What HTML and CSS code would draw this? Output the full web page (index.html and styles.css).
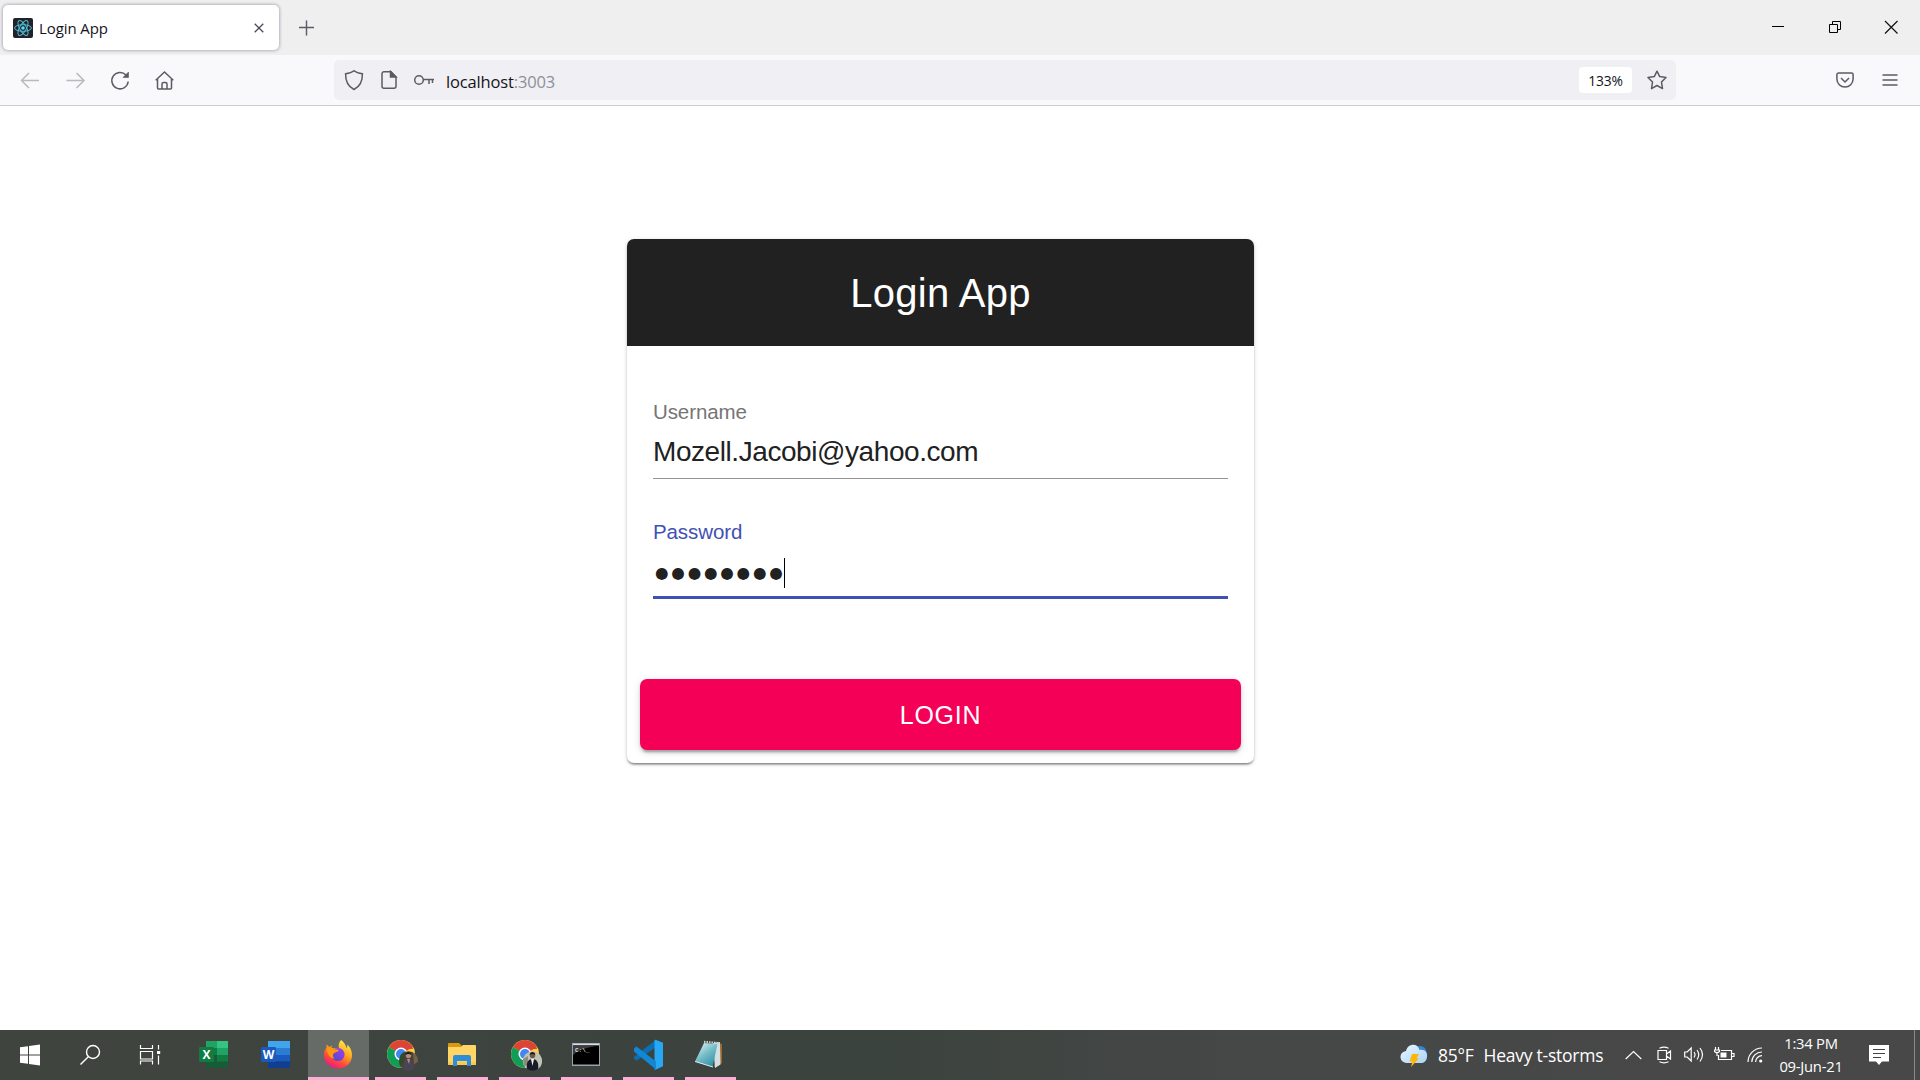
FILE: index.html
```html
<!DOCTYPE html>
<html lang="en">
<head>
<meta charset="utf-8">
<title>Login App</title>
<link rel="stylesheet" href="styles.css">
</head>
<body>
<header class="tabstrip">
  <div class="tab">
    <svg class="favicon" width="20" height="20" viewBox="0 0 20 20"><rect width="20" height="20" rx="2" fill="#20232a"/><g fill="none" stroke="#53bcd6" stroke-width="1"><ellipse cx="10" cy="10" rx="8.4" ry="3.3"/><ellipse cx="10" cy="10" rx="8.4" ry="3.3" transform="rotate(60 10 10)"/><ellipse cx="10" cy="10" rx="8.4" ry="3.3" transform="rotate(120 10 10)"/></g><circle cx="10" cy="10" r="1.8" fill="#61dafb"/></svg>
    <span class="tab-title">Login App</span>
    <svg class="tab-close" width="10" height="10" viewBox="0 0 10 10"><path d="M.7.7l8.6 8.6M9.3.7L.7 9.3" stroke="#4a4a55" stroke-width="1.3"/></svg>
  </div>
  <svg class="new-tab" width="16" height="16" viewBox="0 0 16 16"><path d="M7.5 .5v15M0 7.5h15" stroke="#5b5b66" stroke-width="1.4"/></svg>
  <div class="window-controls">
    <svg width="62" height="54" viewBox="0 0 62 54"><path d="M28 26.5h12" stroke="#000"/></svg>
    <svg width="55" height="54" viewBox="0 0 55 54"><path d="M23.500 24.500h8v8h-8zM26.500 24v-2.500h8v8h-3" fill="none" stroke="#000"/></svg>
    <svg width="59" height="54" viewBox="0 0 59 54"><path d="M24 21l12.500 12.500M36.500 21L24 33.500" stroke="#111" stroke-width="1.2"/></svg>
  </div>
</header>

<nav class="toolbar">
  <div class="nav-buttons">
    <svg width="45" height="50" viewBox="0 0 45 50" class="disabled"><path d="M39 25.500H22M29 18l-7.500 7.500L29 33"/></svg>
    <svg width="45" height="50" viewBox="0 0 45 50" class="disabled"><path d="M21.500 25.500h17M31.500 18l7.500 7.500-7.500 7.500"/></svg>
    <svg width="45" height="50" viewBox="0 0 45 50"><path d="M36 20a8.200 8.200 0 1 0 2.200 6.500"/><path d="M38.500 17v5.500H33z" fill="#5b5b66" stroke-width=".6"/></svg>
    <svg width="45" height="50" viewBox="0 0 45 50"><path d="M20.700 25.200l8.800-8.200 8.800 8.200M22.500 23.800V33a1 1 0 0 0 1 1h12a1 1 0 0 0 1-1v-9.200M27 34v-5a1.500 1.500 0 0 1 1.500-1.500h2A1.500 1.500 0 0 1 32 29v5"/></svg>
  </div>
  <div class="urlbar">
    <svg width="20" height="22" viewBox="0 0 20 22"><path d="M10 1.700c2.600 2.200 5.200 2.600 8.400 3 .2 7-1.400 12.100-8.400 15.800C3 16.800 1.400 11.700 1.600 4.700 4.800 4.300 7.400 3.900 10 1.700z"/></svg>
    <svg class="page-icon" width="18" height="20" viewBox="0 0 18 20"><path d="M11 1.700H4A2 2 0 0 0 2 3.700v12.600a2 2 0 0 0 2 2h10a2 2 0 0 0 2-2V7z"/><path d="M10.500 1.500V7H16z" fill="#5b5b66"/></svg>
    <svg class="key-icon" width="22" height="14" viewBox="0 0 22 14"><circle cx="6" cy="7" r="4.300"/><path d="M10.300 6.500H21M16 6.500V11M19.500 6.500V10"/></svg>
    <span class="url">localhost<span class="port">:3003</span></span>
    <span class="zoom-level">133%</span>
    <svg class="star" width="20" height="20" viewBox="0 0 20 20"><path d="M10 1.200l2.700 5.400 6.300.9-4.500 4.600 1 6.500L10 15.500l-5.500 3.100 1-6.500L1 7.500l6.300-.9z" stroke-linejoin="round"/></svg>
  </div>
  <div class="toolbar-end">
    <svg width="18" height="16" viewBox="0 0 18 16"><path d="M2.500 1h13a1.600 1.600 0 0 1 1.600 1.600V7a8.100 8.100 0 0 1-16.200 0V2.600A1.600 1.600 0 0 1 2.500 1z"/><path d="M5 6l4 4 4-4"/></svg>
    <svg width="16" height="14" viewBox="0 0 16 14"><path d="M.5 2h15M.5 7h15M.5 12h15"/></svg>
  </div>
</nav>

<main class="page">
  <section class="card">
    <h1 class="card-header">Login App</h1>
    <div class="card-body">
      <div class="field">
        <span class="label">Username</span>
        <span class="value">Mozell.Jacobi@yahoo.com</span>
      </div>
      <div class="field focused">
        <span class="label">Password</span>
        <span class="value"><span class="dots">●●●●●●●●</span><span class="caret"></span></span>
      </div>
    </div>
    <button class="login">LOGIN</button>
  </section>
</main>

<footer class="taskbar">
  <div class="system">
    <svg width="60" height="50" viewBox="0 0 60 50"><path d="M20 17.300l8-1.100v8.300h-8zM29 16l11-1.500v10H29zM20 25.500h8v8.300l-8-1.100zM29 25.500h11v10L29 34z" fill="#fff"/></svg>
    <svg width="60" height="50" viewBox="0 0 60 50" fill="none" stroke="#fff" stroke-width="1.400"><circle cx="33" cy="22" r="6.500"/><path d="M28.300 26.700L20.500 34.500"/></svg>
    <svg width="60" height="50" viewBox="0 0 60 50" fill="none" stroke="#fff" stroke-width="1.200"><path d="M20.500 15v3.500h12V15M20.500 21.500h12v7.500h-12zM20.500 34.500V31h12v3.500M38.500 15v4.500M38.500 25.500v9"/><path d="M37 21h3.200v3H37z" fill="#fff" stroke="none"/></svg>
  </div>
  <div class="apps">
    <div class="app">
      <svg width="32" height="32" viewBox="0 0 32 32"><path d="M8 2h11v7H8z" fill="#21a366"/><path d="M19 2h11v7H19z" fill="#33c481"/><path d="M8 9h11v7H8z" fill="#107c41"/><path d="M19 9h11v7H19z" fill="#21a366"/><path d="M8 16h22v13H8z" fill="#185c37"/><path d="M19 16h11v6.500H19z" fill="#107c41"/><rect x="1" y="8" width="15" height="15" rx="1" fill="#107c41"/><text x="8.500" y="20" class="office">X</text></svg>
    </div>
    <div class="app">
      <svg width="32" height="32" viewBox="0 0 32 32"><path d="M8 2h22v7H8z" fill="#41a5ee"/><path d="M8 9h22v7H8z" fill="#2b7cd3"/><path d="M8 16h22v6.500H8z" fill="#185abd"/><path d="M8 22.500h22V29H8z" fill="#103f91"/><rect x="1" y="8" width="15" height="15" rx="1" fill="#185abd"/><text x="8.500" y="20" class="office">W</text></svg>
    </div>
    <div class="app running active">
      <svg width="32" height="32" viewBox="0 0 32 32"><defs><linearGradient id="ff" x1=".8" y1="0" x2=".25" y2="1"><stop offset="0" stop-color="#fff44f"/><stop offset=".4" stop-color="#ffa81c"/><stop offset=".7" stop-color="#ff4a3b"/><stop offset="1" stop-color="#e61587"/></linearGradient><linearGradient id="ffp" x1="1" y1="0" x2="0" y2="1"><stop offset="0" stop-color="#a43df0"/><stop offset="1" stop-color="#4b49c9"/></linearGradient></defs><path d="M19 1c4 3 5 6 5.500 8 1-1 1-2.500.8-3.500C29 9 30 13 30 16c0 8-6 13.500-14 13.500S2 24 2 16c0-3 1-5.500 2.500-7.500V5.500L7.500 8c1-1 2-1.400 3-1.600-1 1-1.600 2-1.500 3L17 9c-1-3 0-6 2-8z" fill="url(#ff)"/><circle cx="16" cy="15.500" r="6.600" fill="url(#ffp)"/><path d="M5 9.500c2-1.300 5-1.200 7 .5 2 1 4 0 5 1.500-1.500 1.500-3.500 1.500-5 2.800-2 1.800-1 4.200 1 5.200-5 0-8-4-8-10z" fill="#ff980e"/></svg>
    </div>
    <div class="app running">
      <svg class="chrome" width="32" height="32" viewBox="0 0 32 32"><circle cx="15" cy="15" r="14" fill="#ffcd40"/><path d="M15 15L2.900 8A14 14 0 0 1 27.100 8z" fill="#dc4437"/><path d="M15 15L2.900 8A14 14 0 0 0 15 29z" fill="#109d58"/><path d="M3 8l6 2h18l-.9-2z" fill="#dc4437"/><circle cx="15" cy="15" r="6.500" fill="#fff"/><circle cx="15" cy="15" r="5" fill="#4285f4"/><circle cx="22.500" cy="22" r="9.700" fill="#4b4235"/><path d="M14 17a9.700 9.700 0 0 1 6-4.400l-2 10-4 4z" fill="#304a2b"/><path d="M27 13.500a9.700 9.700 0 0 1 5 9l-4 3z" fill="#74634c"/><path d="M17 30c0-6 2-10 5.500-10s5.500 4 5.500 10a9.700 9.700 0 0 1-11 0z" fill="#4a4555"/><circle cx="22.500" cy="16.500" r="2.700" fill="#b78b76"/><path d="M19.700 16c-.3-4 5.800-4 5.600 0-1.500-1.500-4-1.500-5.600 0z" fill="#211a19"/><path d="M21 20h3l-1 5z" fill="#b08c96"/></svg>
    </div>
    <div class="app running">
      <svg width="32" height="32" viewBox="0 0 32 32"><path d="M2 5a1 1 0 0 1 1-1h10l3 3v3H2z" fill="#d99a0e"/><path d="M2 8h13l2-2h12a1 1 0 0 1 1 1v18a1 1 0 0 1-1 1H3a1 1 0 0 1-1-1z" fill="#ffd566"/><path d="M2 23h28v2a1 1 0 0 1-1 1H3a1 1 0 0 1-1-1z" fill="#f7c94f"/><path d="M7 27v-9a2 2 0 0 1 2-2h14a2 2 0 0 1 2 2v9h-4v-5H11v5z" fill="#2f8dd6"/></svg>
    </div>
    <div class="app running">
      <svg class="chrome" width="32" height="32" viewBox="0 0 32 32"><circle cx="15" cy="15" r="14" fill="#ffcd40"/><path d="M15 15L2.900 8A14 14 0 0 1 27.100 8z" fill="#dc4437"/><path d="M15 15L2.900 8A14 14 0 0 0 15 29z" fill="#109d58"/><path d="M3 8l6 2h18l-.9-2z" fill="#dc4437"/><circle cx="15" cy="15" r="6.500" fill="#fff"/><circle cx="15" cy="15" r="5" fill="#4285f4"/><circle cx="22.500" cy="22" r="9.700" fill="#c0c4b5"/><path d="M13 20l5-3v9l-4 1z" fill="#8b8d78"/><path d="M17 30c-1-6 1-10 5.500-10s6.500 4 5.500 10a9.700 9.700 0 0 1-11 0z" fill="#161c28"/><circle cx="22.500" cy="16.500" r="2.700" fill="#795342"/><path d="M19.700 16c-.3-4 5.800-4 5.600 0-1.500-1.500-4-1.500-5.600 0z" fill="#1c1717"/><path d="M21 20h3l-1.500 7z" fill="#f2f2f2"/></svg>
    </div>
    <div class="app running">
      <svg class="cmd" width="32" height="32" viewBox="0 0 32 32"><path d="M3 4h28v23H3z" fill="#9ca1a8"/><path d="M4 6.500h26V25.500H4z" fill="#000"/><path d="M4 6.500h26C22 8 10 10 4 16z" fill="#3d3d3d"/><path d="M4 4.700h26v1.300H4z" fill="#d8dde4"/><text x="6" y="12.500" class="prompt">C:\_</text></svg>
    </div>
    <div class="app running">
      <svg width="32" height="32" viewBox="0 0 32 32"><path d="M2 19.500l2.500 2.200L24 8V.8L2 17.800z" fill="#0a6fb5"/><path d="M23.500.8L31 3.800v23.500l-7.500 3.500c-.6 0-1-.3-1-.8V1.700c0-.5.400-.9 1-.9z" fill="#27a8f4"/><path d="M2 9.500l2.500-2L24 22.500V30.500L2 12.500z" fill="#1187d6"/></svg>
    </div>
    <div class="app running">
      <svg width="32" height="32" viewBox="0 0 32 32"><defs><linearGradient id="np" x1="0" y1="0" x2=".7" y2="1"><stop offset="0" stop-color="#e9fafa"/><stop offset=".55" stop-color="#72bac6"/><stop offset="1" stop-color="#2f94a8"/></linearGradient></defs><path d="M25 4l3 1v19l-3 2-5 2z" fill="#99682d"/><path d="M19 4l7-1 .5 22.500-5.500 3.500z" fill="#d4dfe1"/><path d="M10 4l13.500 1L18.500 28 1 22.500z" fill="url(#np)"/><path d="M1 22.500l18 5.500" stroke="#e0eeee"/><path d="M10 2.800l15 1.200" stroke="#d2d2ce" stroke-width="2" stroke-dasharray="1.500 1"/></svg>
    </div>
  </div>
  <div class="tray">
    <svg class="weather" width="28" height="24" viewBox="0 0 28 24"><defs><linearGradient id="cl" x1="0" y1="0" x2="1" y2="1"><stop offset="0" stop-color="#eaf7ff"/><stop offset="1" stop-color="#a9d3f6"/></linearGradient></defs><path d="M17 2.500c5-1.500 9 1 9.300 5 2 3 .7 7-2 9z" fill="#3b82ca"/><path d="M7 19a6 6 0 0 1-1-12C8-1 18-1 19.500 6c6-1 8 3 7.500 7s-3 6-6 6z" fill="url(#cl)"/><path d="M12 10h7l-2.500 4.500H19L11 23l1.500-5.500H9.500z" fill="#fdb50a"/></svg>
    <span class="weather-text"><span>85°F</span><span>Heavy t-storms</span></span>
    <svg class="chevron" width="17" height="10" viewBox="0 0 17 10"><path d="M.7 9l7.800-7.500L16.300 9"/></svg>
    <svg class="meet" width="15" height="18" viewBox="0 0 15 18"><path d="M1 4.500h8.500v9H1zM9.500 8l4-3v8l-4-3M2.500 2.200q4.500-2 9 0M2.500 15.800q4.500 2 9 0"/></svg>
    <svg class="speaker" width="20" height="18" viewBox="0 0 20 18"><path d="M.7 6h2.500l4-4v13l-4-4H.7zM10 6q2 2.500 0 5.500M13 4q3.500 4.500 0 9.500M16 2q5 6.500 0 13.500"/></svg>
    <svg class="battery" width="21" height="16" viewBox="0 0 21 16"><path d="M7 3.500h10.500v9h-13V8M17.500 6.500H20v3h-2.500M1.500 0v2.500M4.500 0v2.500M.5 3h5v1.500q-2.500 2.500-5 0zM3 6v3"/><path d="M6.500 5.500h6v5h-6z" class="charge"/></svg>
    <svg class="wifi" width="16" height="16" viewBox="0 0 16 16"><path d="M1 15A14 14 0 0 1 15 1M4.800 15A10 10 0 0 1 15 5M8.600 15A6.300 6.300 0 0 1 15 8.700"/><circle cx="13.700" cy="14" r="1.600" fill="#fff" stroke="none"/></svg>
    <div class="clock"><span>1:34 PM</span><span>09-Jun-21</span></div>
    <svg class="notes" width="20" height="20" viewBox="0 0 20 20"><path d="M0 0h20v16.500h-7L10 20l-3-3.500H0z" fill="#fff" stroke="none"/><path d="M4 4.500h12M4 8.500h12M4 12.500h8" stroke="#444"/></svg>
    <div class="show-desktop"></div>
  </div>
</footer>
</body>
</html>
```
FILE: styles.css
```css
* { box-sizing: border-box; }
body {
  margin: 0;
  width: 1920px;
  height: 1080px;
  display: flex;
  flex-direction: column;
  overflow: hidden;
  background: #fff;
  font-family: "Open Sans", "Noto Sans", sans-serif;
}
svg { display: block; flex: none; }

/* Tab strip */
.tabstrip {
  height: 55px;
  flex: none;
  display: flex;
  align-items: flex-start;
  background: #efefef;
}
.tab {
  width: 276px;
  height: 45px;
  margin: 5px 0 0 3px;
  padding: 0 15px 0 10px;
  display: flex;
  align-items: center;
  background: #fff;
  border-radius: 5px;
  box-shadow: 0 0 3px 1px #b4b4bf;
}
.tab-title {
  flex: 1;
  margin-left: 6px;
  padding-top: 1px;
  font-size: 15px;
  letter-spacing: -0.1px;
  color: #15141a;
}
.new-tab { margin: 20px 0 0 20px; }
.window-controls { margin-left: auto; display: flex; }

/* Navigation toolbar */
.toolbar {
  height: 51px;
  flex: none;
  display: flex;
  background: #f9f9fb;
  border-bottom: 1px solid #ccc;
}
.toolbar svg { fill: none; stroke: #5b5b66; stroke-width: 1.5; }
.toolbar .disabled { stroke: #b9b9be; }
.nav-buttons { width: 334px; display: flex; }
.urlbar {
  width: 1342px;
  height: 40px;
  margin-top: 5px;
  padding-left: 10px;
  display: flex;
  align-items: center;
  background: #f0f0f4;
  border-radius: 5px;
}
.page-icon { margin-left: 16px; }
.key-icon { margin-left: 15px; }
.url {
  margin-left: 11px;
  flex: 1;
  padding-top: 2px;
  font-size: 16.5px;
  letter-spacing: -0.15px;
  color: #15141a;
}
.port { color: #8f8f98; }
.zoom-level {
  width: 53px;
  height: 26px;
  line-height: 27px;
  text-align: center;
  font-size: 13.8px;
  letter-spacing: -0.2px;
  background: #fff;
  border-radius: 4px;
  color: #15141a;
}
.star { margin: 0 9px 0 15px; }
.toolbar-end {
  flex: 1;
  padding-right: 22px;
  display: flex;
  justify-content: flex-end;
  align-items: center;
  gap: 28px;
}

/* Login page */
.page {
  flex: 1;
  display: flex;
  justify-content: center;
  align-items: flex-start;
  padding: 133px 39px 0 0;
  font-family: "Liberation Sans", Arial, sans-serif;
}
.card {
  width: 627px;
  height: 524px;
  display: flex;
  flex-direction: column;
  border-radius: 7px;
  background: #fff;
  box-shadow: 0 3px 2px -2px rgba(0, 0, 0, .3), 0 2px 2px rgba(0, 0, 0, .2), 0 1px 5px rgba(0, 0, 0, .14);
}
.card-header {
  height: 107px;
  margin: 0;
  padding-top: 1px;
  line-height: 106px;
  text-align: center;
  font-size: 40px;
  font-weight: 400;
  letter-spacing: .3px;
  color: #fff;
  background: #212121;
  border-radius: 7px 7px 0 0;
}
.card-body {
  flex: 1;
  padding: 53px 26px 0;
  display: flex;
  flex-direction: column;
  gap: 40px;
}
.field {
  height: 80px;
  display: flex;
  flex-direction: column;
  border-bottom: 1px solid #949494;
}
.label {
  margin-bottom: 2px;
  font-size: 20.5px;
  line-height: 25px;
  letter-spacing: -.1px;
  color: #757575;
}
.value {
  flex: 1;
  display: flex;
  align-items: center;
  font-size: 28px;
  line-height: 52px;
  letter-spacing: -.43px;
  color: #212121;
}
.focused { border-bottom: 3px solid #3f51b5; }
.focused .label { color: #3f51b5; }
.dots {
  width: 130px;
  margin-left: 2px;
  padding-top: 1px;
  font-family: "DejaVu Sans", sans-serif;
  font-size: 15.5px;
  letter-spacing: 2.8px;
  white-space: nowrap;
}
.caret { width: 1px; height: 30px; margin-left: -1px; background: #000; }
.login {
  height: 71px;
  margin: 0 13px 13px;
  padding: 2px 0 0;
  border: 0;
  border-radius: 7px;
  background: #f50057;
  color: #fff;
  font: 400 25px "Liberation Sans", Arial, sans-serif;
  letter-spacing: .02857em;
  box-shadow: 0 5px 2px -3px rgba(0, 0, 0, .2), 0 3px 3px rgba(0, 0, 0, .14), 0 2px 8px rgba(0, 0, 0, .12);
}

/* Taskbar */
.taskbar {
  height: 50px;
  flex: none;
  display: flex;
  background: linear-gradient(90deg, #40443f 0, #3b433e 45%, #464747 65%, #484848 100%);
  color: #fff;
}
.system { width: 183px; display: flex; }
.apps { display: flex; }
.app {
  width: 62px;
  height: 50px;
  padding-top: 9px;
  display: flex;
  flex-direction: column;
  align-items: center;
  justify-content: space-between;
}
.running::after { content: ""; width: 51px; height: 3px; background: #fdaed6; }
.active { width: 61px; margin-left: 1px; background: #666b67; }
.active svg { margin-right: 2px; }
.active::after { width: 61px; }
.chrome { margin-left: 3px; }
.cmd { margin-right: 3px; }
.office { font: 700 12px "Open Sans", sans-serif; fill: #fff; text-anchor: middle; }
.prompt { font: 700 6px "Liberation Mono", monospace; fill: #ddd; }
.tray {
  flex: 1;
  display: flex;
  align-items: center;
  justify-content: flex-end;
}
.tray svg { fill: none; stroke: #fff; stroke-width: 1.2; }
.tray .weather { stroke: none; margin-top: 2px; }
.weather-text {
  width: 168px;
  margin-left: 9px;
  padding-left: 1px;
  display: flex;
  gap: 10px;
  white-space: nowrap;
  font-size: 17.5px;
  letter-spacing: -0.25px;
}
.chevron { margin-left: 20px; }
.meet { margin-left: 15px; }
.speaker { margin-left: 12px; }
.battery { margin-left: 10px; }
.battery .charge { fill: #fff; stroke: none; }
.wifi { margin-left: 12px; }
.clock {
  width: 74px;
  margin-left: 11px;
  display: flex;
  flex-direction: column;
  align-items: center;
  font-size: 14.8px;
  line-height: 23px;
  letter-spacing: -0.25px;
  white-space: nowrap;
}
.notes { margin-left: 21px; }
.show-desktop { width: 6px; height: 50px; margin-left: 25px; border-left: 1px solid #8a8a8a; }
```
